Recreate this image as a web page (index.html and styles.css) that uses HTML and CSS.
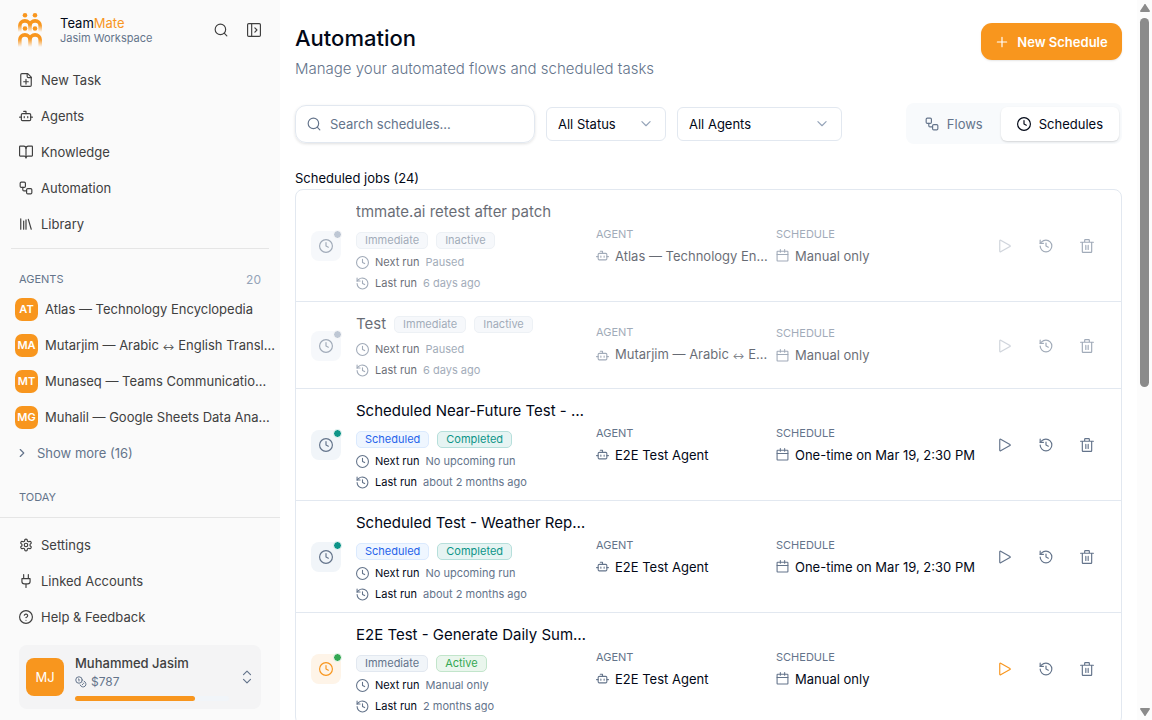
FILE: index.html
```html
<!DOCTYPE html>
<html lang="en">
<head>
    <meta charset="UTF-8">
    <meta name="viewport" content="width=device-width, initial-scale=1.0">
    <title>TeamMate - Automation</title>
    <link rel="stylesheet" href="styles.css">
</head>
<body>
    <!-- icon set -->
    <svg class="sprite" aria-hidden="true">
        <symbol id="i-search" viewBox="0 0 24 24"><circle cx="11" cy="11" r="9"/><path d="m22 22-4.500-4.500"/></symbol>
        <symbol id="i-panel" viewBox="0 0 24 24"><rect x="1" y="1" width="22" height="22" rx="2"/><path d="M8 1v22M13.500 8.500 17 12l-3.500 3.500"/></symbol>
        <symbol id="i-file" viewBox="0 0 24 24"><path d="M15 1H5a2 2 0 0 0-2 2v18a2 2 0 0 0 2 2h14a2 2 0 0 0 2-2V7Z"/><path d="M14 1v5a2 2 0 0 0 2 2h5M8 15h8M12 19v-8"/></symbol>
        <symbol id="i-bot" viewBox="0 0 24 24"><path d="M12 8V4H8"/><rect x="4" y="8" width="16" height="12" rx="2"/><path d="M1 14h3M20 14h3M15 13v2M9 13v2"/></symbol>
        <symbol id="i-book" viewBox="0 0 24 24"><path d="M12 6v16"/><path d="M2 19a1 1 0 0 1-1-1V3a1 1 0 0 1 1-1h6a4 4 0 0 1 4 4 4 4 0 0 1 4-4h6a1 1 0 0 1 1 1v15a1 1 0 0 1-1 1h-7a3 3 0 0 0-3 3 3 3 0 0 0-3-3z"/></symbol>
        <symbol id="i-flow" viewBox="0 0 24 24"><rect x="2" y="2" width="9" height="9" rx="2"/><path d="M6.500 11v4a2 2 0 0 0 2 2H13"/><rect x="13" y="13" width="9" height="9" rx="2"/></symbol>
        <symbol id="i-library" viewBox="0 0 24 24"><path d="m16 4 5 17M12 5v16M8 7v14M3 3v18"/></symbol>
        <symbol id="i-right" viewBox="0 0 24 24"><path d="m9 18 6-6-6-6"/></symbol>
        <symbol id="i-down" viewBox="0 0 24 24"><path d="m5 8 7 7 7-7"/></symbol>
        <symbol id="i-updown" viewBox="0 0 24 24"><path d="m6 16 6 6 6-6M6 8l6-6 6 6"/></symbol>
        <symbol id="i-gear" viewBox="0 0 24 24"><path d="M12.220 2h-.44a2 2 0 0 0-2 2v.18a2 2 0 0 1-1 1.730l-.43.25a2 2 0 0 1-2 0l-.15-.08a2 2 0 0 0-2.730.73l-.22.38a2 2 0 0 0 .73 2.730l.15.1a2 2 0 0 1 1 1.720v.51a2 2 0 0 1-1 1.740l-.15.09a2 2 0 0 0-.73 2.730l.22.38a2 2 0 0 0 2.730.73l.15-.08a2 2 0 0 1 2 0l.43.25a2 2 0 0 1 1 1.730V20a2 2 0 0 0 2 2h.44a2 2 0 0 0 2-2v-.18a2 2 0 0 1 1-1.730l.43-.25a2 2 0 0 1 2 0l.15.08a2 2 0 0 0 2.730-.73l.22-.39a2 2 0 0 0-.73-2.730l-.15-.08a2 2 0 0 1-1-1.740v-.5a2 2 0 0 1 1-1.740l.15-.09a2 2 0 0 0 .73-2.730l-.22-.38a2 2 0 0 0-2.730-.73l-.15.08a2 2 0 0 1-2 0l-.43-.25a2 2 0 0 1-1-1.730V4a2 2 0 0 0-2-2z"/><circle cx="12" cy="12" r="3"/></symbol>
        <symbol id="i-plug" viewBox="0 0 24 24"><path d="M12 23v-6M8 8V1M16 8V1M19 8v5a4 4 0 0 1-4 4H9a4 4 0 0 1-4-4V8Z"/></symbol>
        <symbol id="i-help" viewBox="0 0 24 24"><circle cx="12" cy="12" r="11"/><path d="M9.090 9a3 3 0 0 1 5.830 1c0 2-3 3-3 3M12 17.500h.01"/></symbol>
        <symbol id="i-coins" viewBox="0 0 24 24"><circle cx="8" cy="8" r="6.500"/><path d="M18.090 10.370A6 6 0 1 1 10.340 18M7 6h1v4M16.710 13.880l.7.71-2.820 2.820"/></symbol>
        <symbol id="i-plus" viewBox="0 0 24 24"><path d="M4 12h16M12 4v16"/></symbol>
        <symbol id="i-clock" viewBox="0 0 24 24"><circle cx="12" cy="12" r="11"/><path d="M12 6v6l4 2"/></symbol>
        <symbol id="i-history" viewBox="0 0 24 24"><path d="M2 12a10 10 0 1 0 10-10 10.500 10.500 0 0 0-7.500 3L2 7.500"/><path d="M2 2v5.500h5.500M12 7v5l4 2"/></symbol>
        <symbol id="i-calendar" viewBox="0 0 24 24"><rect x="2" y="4" width="20" height="18" rx="1"/><path d="M8 1v5M16 1v5M2 10h20"/></symbol>
        <symbol id="i-play" viewBox="0 0 24 24"><path d="M3 3a1 1 0 0 1 1.500-.9l16 9a1 1 0 0 1 0 1.800l-16 9A1 1 0 0 1 3 21z"/></symbol>
        <symbol id="i-trash" viewBox="0 0 24 24"><path d="M1 5.500h22M20 5.500V22a1 1 0 0 1-1 1H5a1 1 0 0 1-1-1V5.500M8 5V2a1 1 0 0 1 1-1h6a1 1 0 0 1 1 1v3M10 11v7M14 11v7"/></symbol>
    </svg>

    <div class="app">
        <aside class="sidebar">
            <header class="brand">
                <svg class="logo" viewBox="0 0 24 34" aria-hidden="true">
                    <defs>
                        <linearGradient id="fadeTop" gradientUnits="userSpaceOnUse" x1="0" y1="12" x2="0" y2="19">
                            <stop offset="0" stop-color="#f8961e"/>
                            <stop offset="1" stop-color="#f8961e" stop-opacity="0"/>
                        </linearGradient>
                        <linearGradient id="fadeBottom" gradientUnits="userSpaceOnUse" x1="0" y1="26" x2="0" y2="34">
                            <stop offset="0" stop-color="#f8961e"/>
                            <stop offset="1" stop-color="#f8961e" stop-opacity="0"/>
                        </linearGradient>
                    </defs>
                    <g fill="#f8961e"><circle cx="7" cy="2.300" r="2.300"/><circle cx="17" cy="2.300" r="2.300"/><circle cx="7" cy="15.500" r="2.300"/><circle cx="17" cy="15.500" r="2.300"/></g>
                    <g fill="none" stroke-width="3.600">
                        <path stroke="url(#fadeTop)" d="M1.800 19v-6a5.100 5.100 0 0 1 10.200 0v6M12 13a5.100 5.100 0 0 1 10.200 0v6"/>
                        <path stroke="url(#fadeBottom)" d="M1.800 34v-7a5.100 5.100 0 0 1 10.200 0v7M12 27a5.100 5.100 0 0 1 10.200 0v7"/>
                    </g>
                </svg>
                <div class="brand-text">
                    <div class="brand-name">Team<span>Mate</span></div>
                    <div class="brand-workspace">Jasim Workspace</div>
                </div>
                <button class="icon-btn" aria-label="Search"><svg class="icon"><use href="#i-search"/></svg></button>
                <button class="icon-btn" aria-label="Toggle sidebar"><svg class="icon"><use href="#i-panel"/></svg></button>
            </header>

            <nav class="nav">
                <a href="#" class="nav-link"><svg class="icon"><use href="#i-file"/></svg>New Task</a>
                <a href="#" class="nav-link"><svg class="icon"><use href="#i-bot"/></svg>Agents</a>
                <a href="#" class="nav-link"><svg class="icon"><use href="#i-book"/></svg>Knowledge</a>
                <a href="#" class="nav-link"><svg class="icon"><use href="#i-flow"/></svg>Automation</a>
                <a href="#" class="nav-link"><svg class="icon"><use href="#i-library"/></svg>Library</a>
            </nav>

            <section class="agents">
                <div class="section-head"><h2>AGENTS</h2><span>20</span></div>
                <a href="#" class="agent-link"><span class="avatar">AT</span><span class="agent-name">Atlas — Technology Encyclopedia</span></a>
                <a href="#" class="agent-link"><span class="avatar">MA</span><span class="agent-name">Mutarjim — Arabic <span class="swap">↔</span> English Transl…</span></a>
                <a href="#" class="agent-link"><span class="avatar">MT</span><span class="agent-name">Munaseq — Teams Communicatio…</span></a>
                <a href="#" class="agent-link"><span class="avatar">MG</span><span class="agent-name">Muhalil — Google Sheets Data Ana…</span></a>
                <button class="show-more"><svg class="icon"><use href="#i-right"/></svg>Show more (16)</button>
            </section>

            <h2 class="today">TODAY</h2>

            <footer class="sidebar-footer">
                <a href="#" class="nav-link"><svg class="icon"><use href="#i-gear"/></svg>Settings</a>
                <a href="#" class="nav-link"><svg class="icon"><use href="#i-plug"/></svg>Linked Accounts</a>
                <a href="#" class="nav-link"><svg class="icon"><use href="#i-help"/></svg>Help &amp; Feedback</a>
                <button class="user">
                    <span class="user-avatar">MJ</span>
                    <span class="user-info">
                        <span class="user-name">Muhammed Jasim</span>
                        <span class="user-credit"><svg class="icon"><use href="#i-coins"/></svg>$787</span>
                        <span class="meter"><span class="meter-fill" style="width: 78%"></span></span>
                    </span>
                    <svg class="icon"><use href="#i-updown"/></svg>
                </button>
            </footer>
        </aside>

        <main class="main">
            <header class="page-head">
                <div>
                    <h1>Automation</h1>
                    <p>Manage your automated flows and scheduled tasks</p>
                </div>
                <button class="primary"><svg class="icon"><use href="#i-plus"/></svg>New Schedule</button>
            </header>

            <div class="toolbar">
                <label class="search">
                    <svg class="icon"><use href="#i-search"/></svg>
                    <input type="text" placeholder="Search schedules..." aria-label="Search schedules">
                </label>
                <div class="select select-status">
                    <select aria-label="Status"><option>All Status</option></select>
                    <svg class="icon"><use href="#i-down"/></svg>
                </div>
                <div class="select select-agent">
                    <select aria-label="Agent"><option>All Agents</option></select>
                    <svg class="icon"><use href="#i-down"/></svg>
                </div>
                <div class="tabs">
                    <button class="tab"><svg class="icon"><use href="#i-flow"/></svg>Flows</button>
                    <button class="tab active"><svg class="icon"><use href="#i-clock"/></svg>Schedules</button>
                </div>
            </div>

            <h2 class="list-title">Scheduled jobs (24)</h2>
            <div class="jobs">
                <article class="job inactive">
                    <div class="job-icon"><svg class="icon"><use href="#i-clock"/></svg><span class="dot"></span></div>
                    <div class="job-info">
                        <div class="job-head"><h3>tmmate.ai retest after patch</h3><span class="badge">Immediate</span><span class="badge">Inactive</span></div>
                        <div class="run"><svg class="icon"><use href="#i-clock"/></svg>Next run <span>Paused</span></div>
                        <div class="run"><svg class="icon"><use href="#i-history"/></svg>Last run <span>6 days ago</span></div>
                    </div>
                    <div class="field"><div class="field-label">AGENT</div><div class="field-value"><svg class="icon"><use href="#i-bot"/></svg><span>Atlas — Technology En…</span></div></div>
                    <div class="field"><div class="field-label">SCHEDULE</div><div class="field-value"><svg class="icon"><use href="#i-calendar"/></svg><span>Manual only</span></div></div>
                    <div class="actions">
                        <button class="play" aria-label="Run" disabled><svg class="icon"><use href="#i-play"/></svg></button>
                        <button aria-label="History"><svg class="icon"><use href="#i-history"/></svg></button>
                        <button aria-label="Delete"><svg class="icon"><use href="#i-trash"/></svg></button>
                    </div>
                </article>

                <article class="job inactive">
                    <div class="job-icon"><svg class="icon"><use href="#i-clock"/></svg><span class="dot"></span></div>
                    <div class="job-info">
                        <div class="job-head"><h3>Test</h3><span class="badge">Immediate</span><span class="badge">Inactive</span></div>
                        <div class="run"><svg class="icon"><use href="#i-clock"/></svg>Next run <span>Paused</span></div>
                        <div class="run"><svg class="icon"><use href="#i-history"/></svg>Last run <span>6 days ago</span></div>
                    </div>
                    <div class="field"><div class="field-label">AGENT</div><div class="field-value"><svg class="icon"><use href="#i-bot"/></svg><span>Mutarjim — Arabic <span class="swap">↔</span> E…</span></div></div>
                    <div class="field"><div class="field-label">SCHEDULE</div><div class="field-value"><svg class="icon"><use href="#i-calendar"/></svg><span>Manual only</span></div></div>
                    <div class="actions">
                        <button class="play" aria-label="Run" disabled><svg class="icon"><use href="#i-play"/></svg></button>
                        <button aria-label="History"><svg class="icon"><use href="#i-history"/></svg></button>
                        <button aria-label="Delete"><svg class="icon"><use href="#i-trash"/></svg></button>
                    </div>
                </article>

                <article class="job completed">
                    <div class="job-icon"><svg class="icon"><use href="#i-clock"/></svg><span class="dot"></span></div>
                    <div class="job-info">
                        <div class="job-head"><h3>Scheduled Near-Future Test - …</h3><span class="badge badge-blue">Scheduled</span><span class="badge badge-teal">Completed</span></div>
                        <div class="run"><svg class="icon"><use href="#i-clock"/></svg>Next run <span>No upcoming run</span></div>
                        <div class="run"><svg class="icon"><use href="#i-history"/></svg>Last run <span>about 2 months ago</span></div>
                    </div>
                    <div class="field"><div class="field-label">AGENT</div><div class="field-value"><svg class="icon"><use href="#i-bot"/></svg><span>E2E Test Agent</span></div></div>
                    <div class="field"><div class="field-label">SCHEDULE</div><div class="field-value"><svg class="icon"><use href="#i-calendar"/></svg><span>One-time on Mar 19, 2:30 PM</span></div></div>
                    <div class="actions">
                        <button class="play" aria-label="Run"><svg class="icon"><use href="#i-play"/></svg></button>
                        <button aria-label="History"><svg class="icon"><use href="#i-history"/></svg></button>
                        <button aria-label="Delete"><svg class="icon"><use href="#i-trash"/></svg></button>
                    </div>
                </article>

                <article class="job completed">
                    <div class="job-icon"><svg class="icon"><use href="#i-clock"/></svg><span class="dot"></span></div>
                    <div class="job-info">
                        <div class="job-head"><h3>Scheduled Test - Weather Rep…</h3><span class="badge badge-blue">Scheduled</span><span class="badge badge-teal">Completed</span></div>
                        <div class="run"><svg class="icon"><use href="#i-clock"/></svg>Next run <span>No upcoming run</span></div>
                        <div class="run"><svg class="icon"><use href="#i-history"/></svg>Last run <span>about 2 months ago</span></div>
                    </div>
                    <div class="field"><div class="field-label">AGENT</div><div class="field-value"><svg class="icon"><use href="#i-bot"/></svg><span>E2E Test Agent</span></div></div>
                    <div class="field"><div class="field-label">SCHEDULE</div><div class="field-value"><svg class="icon"><use href="#i-calendar"/></svg><span>One-time on Mar 19, 2:30 PM</span></div></div>
                    <div class="actions">
                        <button class="play" aria-label="Run"><svg class="icon"><use href="#i-play"/></svg></button>
                        <button aria-label="History"><svg class="icon"><use href="#i-history"/></svg></button>
                        <button aria-label="Delete"><svg class="icon"><use href="#i-trash"/></svg></button>
                    </div>
                </article>

                <article class="job running">
                    <div class="job-icon"><svg class="icon"><use href="#i-clock"/></svg><span class="dot"></span></div>
                    <div class="job-info">
                        <div class="job-head"><h3>E2E Test - Generate Daily Sum…</h3><span class="badge">Immediate</span><span class="badge badge-green">Active</span></div>
                        <div class="run"><svg class="icon"><use href="#i-clock"/></svg>Next run <span>Manual only</span></div>
                        <div class="run"><svg class="icon"><use href="#i-history"/></svg>Last run <span>2 months ago</span></div>
                    </div>
                    <div class="field"><div class="field-label">AGENT</div><div class="field-value"><svg class="icon"><use href="#i-bot"/></svg><span>E2E Test Agent</span></div></div>
                    <div class="field"><div class="field-label">SCHEDULE</div><div class="field-value"><svg class="icon"><use href="#i-calendar"/></svg><span>Manual only</span></div></div>
                    <div class="actions">
                        <button class="play" aria-label="Run"><svg class="icon"><use href="#i-play"/></svg></button>
                        <button aria-label="History"><svg class="icon"><use href="#i-history"/></svg></button>
                        <button aria-label="Delete"><svg class="icon"><use href="#i-trash"/></svg></button>
                    </div>
                </article>
            </div>
        </main>

        <div class="scrollbar" aria-hidden="true">
            <svg class="arrow" viewBox="0 0 10 8"><path d="M4 1a1 1 0 0 1 2 0l4 6a1 1 0 0 1-1 1H1a1 1 0 0 1-1-1z"/></svg>
            <div class="scroll-track"><div class="scroll-thumb"></div></div>
            <svg class="arrow" viewBox="0 0 10 8"><path d="M4 7a1 1 0 0 0 2 0l4-6a1 1 0 0 0-1-1H1a1 1 0 0 0-1 1z"/></svg>
        </div>
    </div>
</body>
</html>
```
FILE: styles.css
```css
* {
    box-sizing: border-box;
}
body {
    margin: 0;
    font-family: Inter, "Liberation Sans", sans-serif;
    font-size: 13px;
    color: #020817;
    background: #fff;
}
h1, h2, h3, p {
    margin: 0;
    font-weight: 400;
}
button, input, select {
    font-family: inherit;
    font-size: inherit;
    color: inherit;
}
button {
    border: none;
    background: none;
    padding: 0;
    cursor: pointer;
}
a {
    color: inherit;
    text-decoration: none;
}
.sprite {
    display: none;
}
.icon {
    width: 14px;
    height: 14px;
    flex: none;
    fill: none;
    stroke: currentColor;
    stroke-width: 2;
    stroke-linecap: round;
    stroke-linejoin: round;
}
.app {
    display: flex;
    height: 100vh;
    overflow: hidden;
}

/* sidebar */
.sidebar {
    width: 280px;
    flex: none;
    display: flex;
    flex-direction: column;
    background: #fafafa;
    color: #404040;
}
.brand {
    display: flex;
    align-items: center;
    height: 62px;
    padding: 0 15px 2px 18px;
}
.logo {
    width: 24px;
    height: 34px;
}
.brand-text {
    flex: 1;
    margin-left: 18px;
    padding-top: 2px;
    line-height: 15px;
}
.brand-name {
    color: #020817;
}
.brand-name span {
    color: #f8961e;
}
.brand-workspace {
    font-size: 11px;
    color: #64748b;
}
.icon-btn {
    display: grid;
    place-items: center;
    width: 22px;
    height: 30px;
}
.icon-btn + .icon-btn {
    margin-left: 11px;
}
.nav {
    margin: 0 11px;
    padding-bottom: 6px;
    border-bottom: 1px solid #e5e5e5;
}
.nav-link {
    display: flex;
    align-items: center;
    gap: 8px;
    height: 36px;
    padding: 0 8px;
}
.agents {
    padding: 18px 15px 0;
}
.section-head {
    display: flex;
    justify-content: space-between;
    align-items: center;
    height: 24px;
    padding: 0 4px;
    color: #94a3b8;
    font-size: 12px;
}
.section-head h2, .today {
    font-size: 11px;
    color: #64748b;
}
.agent-link {
    display: flex;
    align-items: center;
    gap: 7px;
    height: 36px;
}
.avatar {
    display: grid;
    place-items: center;
    flex: none;
    width: 23px;
    height: 23px;
    border-radius: 7px;
    background: #f8961e;
    color: #fff;
    font-size: 11px;
    font-weight: 600;
}
.agent-name {
    white-space: nowrap;
}
.swap {
    font-size: 9px;
}
.show-more {
    display: flex;
    align-items: center;
    gap: 8px;
    height: 36px;
    color: #64748b;
}
.today {
    margin: auto 19px 0;
    line-height: 16px;
    padding-bottom: 12px;
}
.sidebar-footer {
    padding: 9px 19px 11px;
    border-top: 1px solid #e5e5e5;
}
.sidebar-footer .nav-link {
    padding: 0;
}
.user {
    display: flex;
    align-items: center;
    width: 100%;
    height: 64px;
    margin-top: 10px;
    padding: 0 7px;
    border-radius: 8px;
    background: #f4f4f5;
    text-align: left;
}
.user-avatar {
    display: grid;
    place-items: center;
    width: 38px;
    height: 38px;
    border-radius: 8px;
    background: #f8961e;
    color: #fff;
}
.user-info {
    flex: 1;
    display: flex;
    flex-direction: column;
    margin-left: 11px;
}
.user-name {
    line-height: 18px;
    font-weight: 500;
}
.user-credit {
    display: flex;
    align-items: center;
    gap: 4px;
    line-height: 20px;
    font-size: 12px;
    color: #64748b;
}
.user-credit .icon {
    width: 12px;
    height: 12px;
}
.user > .icon {
    color: #64748b;
}
.meter {
    width: 154px;
    height: 5px;
    margin-top: 4px;
    border-radius: 3px;
    background: #f1f5f9;
}
.meter-fill {
    display: block;
    height: 5px;
    border-radius: 3px;
    background: #f8961e;
}

/* main */
.main {
    flex: 1;
    min-width: 0;
    padding: 23px 15px;
    overflow: hidden;
}
.page-head {
    display: flex;
    justify-content: space-between;
    align-items: flex-start;
}
.page-head h1 {
    font-size: 22px;
    font-weight: 500;
    line-height: 30px;
}
.page-head p {
    margin-top: 5px;
    font-size: 15px;
    font-weight: 300;
    line-height: 22px;
    color: #64748b;
}
.primary {
    display: flex;
    align-items: center;
    justify-content: center;
    gap: 8px;
    width: 141px;
    height: 37px;
    border-radius: 11px;
    background: #f8961e;
    color: #fff;
    font-weight: 600;
    box-shadow: 0 1px 2px rgba(0,0,0,0.1);
}
.toolbar {
    display: flex;
    align-items: center;
    gap: 11px;
    margin-top: 23px;
}
.search {
    display: flex;
    align-items: center;
    gap: 9px;
    width: 240px;
    height: 38px;
    padding: 0 11px;
    border: 1px solid #e2e8f0;
    border-radius: 11px;
    box-shadow: 0 1px 3px rgba(0,0,0,0.12);
    color: #64748b;
}
.search input {
    flex: 1;
    min-width: 0;
    padding: 0;
    border: none;
    outline: none;
    background: none;
}
.search input::placeholder {
    color: #64748b;
}
.select {
    display: grid;
    align-items: center;
    height: 34px;
}
.select-status {
    width: 120px;
}
.select-agent {
    width: 165px;
}
.select select {
    grid-area: 1 / 1;
    height: 34px;
    padding: 0 11px;
    border: 1px solid #e2e8f0;
    border-radius: 6px;
    background: #fff;
    appearance: none;
}
.select .icon {
    grid-area: 1 / 1;
    justify-self: end;
    margin-right: 13px;
    color: #94a3b8;
    pointer-events: none;
}
.tabs {
    display: flex;
    gap: 2px;
    margin-left: auto;
    padding: 4px 3px 3px;
    border-radius: 8px;
    background: #f8fafc;
}
.tab {
    display: flex;
    align-items: center;
    gap: 8px;
    height: 34px;
    padding: 0 16px;
    border-radius: 6px;
    color: #64748b;
}
.tab.active {
    background: #fff;
    color: #020817;
    box-shadow: 0 1px 2px rgba(0,0,0,0.15);
}
.list-title {
    margin: 24px 0 1px;
    font-size: 13px;
    line-height: 20px;
}

/* jobs */
.jobs {
    border: 1px solid #e2e8f0;
    border-radius: 8px;
}
.job {
    display: grid;
    grid-template-columns: 30px 225px 165px minmax(0, 1fr) auto;
    column-gap: 15px;
    align-items: center;
    padding: 10px 16px 9px 15px;
}
.job + .job {
    border-top: 1px solid #e2e8f0;
}
.job.inactive > * {
    opacity: 0.6;
}
.job-icon {
    position: relative;
    display: grid;
    place-items: center;
    height: 30px;
    border-radius: 8px;
    background: #f1f5f9;
    color: #64748b;
}
.dot {
    position: absolute;
    top: -1px;
    right: -1px;
    width: 9px;
    height: 9px;
    border: 1px solid #fff;
    border-radius: 50%;
    background: #94a3b8;
}
.completed .dot {
    background: #0d9488;
}
.running .dot {
    background: #34a853;
}
.running .job-icon {
    background: #fef4e8;
    color: #f8961e;
}
.job-head {
    display: flex;
    flex-wrap: wrap;
    align-items: center;
    gap: 8px;
    margin-bottom: 4px;
}
.job-head h3 {
    font-size: 15px;
    line-height: 24px;
    white-space: nowrap;
}
.badge {
    height: 17px;
    padding: 0 8px;
    border: 1px solid #e2e8f0;
    border-radius: 5px;
    background: #f1f5f9;
    color: #64748b;
    font-size: 11px;
    line-height: 15px;
}
.badge-blue {
    border-color: #dbeafe;
    background: #eff6ff;
    color: #2563eb;
}
.badge-teal {
    border-color: #b6dfdb;
    background: #e6f4f3;
    color: #0d9488;
}
.badge-green {
    border-color: #c2e5cb;
    background: #eaf6ed;
    color: #34a853;
}
.run {
    display: flex;
    align-items: center;
    gap: 6px;
    font-size: 11px;
    line-height: 18px;
}
.run + .run {
    margin-top: 3px;
}
.run .icon {
    width: 13px;
    height: 13px;
}
.run .icon, .run span {
    color: #64748b;
}
.field {
    min-width: 0;
    padding-bottom: 2px;
}
.field-label {
    margin-bottom: 5px;
    font-size: 11px;
    line-height: 16px;
    color: #64748b;
}
.field-value {
    display: flex;
    align-items: center;
    gap: 6px;
    line-height: 18px;
    white-space: nowrap;
}
.field-value .icon {
    width: 13px;
    height: 13px;
    color: #64748b;
}
.actions {
    display: flex;
    gap: 5px;
    color: #64748b;
}
.actions button {
    display: grid;
    place-items: center;
    width: 36px;
    height: 34px;
}
.actions button:disabled {
    opacity: 0.5;
}
.running .play {
    color: #f8961e;
}

/* scrollbar */
.scrollbar {
    display: flex;
    flex-direction: column;
    align-items: center;
    flex: none;
    width: 15px;
    padding: 4px 0;
    background: #fcfcfc;
}
.arrow {
    width: 10px;
    height: 8px;
    fill: #8b8b8b;
}
.scroll-track {
    flex: 1;
    padding: 6px 0;
}
.scroll-thumb {
    width: 9px;
    height: 54%;
    border-radius: 5px;
    background: #8b8b8b;
}
```
